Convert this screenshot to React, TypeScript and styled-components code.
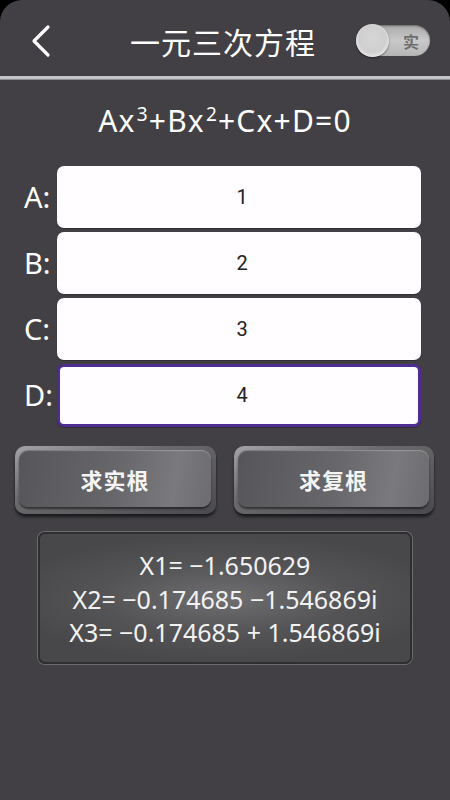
import React from "react";
import styled, { createGlobalStyle } from "styled-components";

const Global = createGlobalStyle`
  html, body { margin: 0; padding: 0; background: #000; }
  body { font-family: "Noto Sans", "Noto Sans CJK SC", sans-serif; }
  * { box-sizing: border-box; }
`;

const Screen = styled.div`
  width: 450px;
  height: 800px;
  background: #424045;
  border-radius: 22px 22px 0 0;
  overflow: hidden;
  display: flex;
  flex-direction: column;
  color: #fff;
`;

const Header = styled.header`
  height: 76px;
  display: flex;
  align-items: center;
  padding: 0 20px 0 30px;
`;

const BackBtn = styled.div`
  width: 26px;
  height: 40px;
  display: flex;
  align-items: center;
  margin-top: 6px;
`;

const Title = styled.h1`
  flex: 1;
  margin: 6px 0 0 0;
  text-align: center;
  font-family: "Noto Sans CJK SC", sans-serif;
  font-weight: 400;
  font-size: 30px;
  letter-spacing: 1px;
  padding-left: 34px;
`;

const Toggle = styled.div`
  width: 74px;
  height: 31px;
  border-radius: 16px;
  background: linear-gradient(#a9a9a9, #c9c9c9 50%, #b5b5b5);
  box-shadow: inset 0 1px 2px rgba(0,0,0,0.4);
  position: relative;
  margin-top: 5px;
  display: flex;
  align-items: center;
  justify-content: flex-end;
  padding-right: 11px;
`;

const Knob = styled.div`
  position: absolute;
  left: 0;
  top: -1px;
  width: 33px;
  height: 33px;
  border-radius: 50%;
  background: radial-gradient(circle at 50% 45%, #d6d6d6 0%, #cfcfcf 55%, #e9e9e9 75%, #9a9a9a 100%);
  box-shadow: 0 1px 2px rgba(0,0,0,0.5);
`;

const ToggleText = styled.span`
  font-family: "Noto Sans CJK SC", serif;
  font-size: 16px;
  font-weight: 700;
  color: #6e6e6e;
`;

const Divider = styled.div`
  height: 4px;
  background: #c3c6c6;
  border-bottom: 1px solid #8b8d8f;
`;

const Equation = styled.div`
  text-align: center;
  font-family: "Noto Sans", sans-serif;
  font-size: 30px;
  letter-spacing: 1.2px;
  margin-top: 20px;
  height: 42px;
  line-height: 42px;
  sup { font-size: 19px; vertical-align: 0; position: relative; top: -11px; margin-left: 1px; }
`;

const Form = styled.div`
  margin-top: 24px;
  display: flex;
  flex-direction: column;
  gap: 4px;
  padding: 0 29px 0 24px;
`;

const Row = styled.div`
  display: flex;
  align-items: center;
  height: 62px;
`;

const Label = styled.span`
  width: 33px;
  font-size: 29px;
  font-family: "Noto Sans", sans-serif;
  margin-top: -2px;
`;

const Field = styled.div<{ $focus?: boolean }>`
  flex: 1;
  height: ${(p) => (p.$focus ? "63px" : "62px")};
  background: #fffdff;
  border-radius: 7px;
  border: ${(p) => (p.$focus ? "3px solid #4f2c92" : "none")};
  display: flex;
  align-items: center;
  justify-content: center;
  padding-left: 6px;
  color: #222;
  font-size: 20px;
  font-family: "Roboto", sans-serif;
  box-shadow: 0 1px 1px rgba(0,0,0,0.3);
`;

const Buttons = styled.div`
  display: grid;
  grid-template-columns: 201px 200px;
  justify-content: space-between;
  padding: 0 16px 0 15px;
  margin-top: 20px;
`;

const Btn = styled.div`
  height: 68px;
  border-radius: 10px;
  background: linear-gradient(160deg, #a4a4a6, #6a6a6d 40%, #4a4a4e);
  padding: 4px 5px 7px 4px;
  box-shadow: 0 3px 3px rgba(0,0,0,0.6);
  display: flex;
`;

const BtnFace = styled.div`
  flex: 1;
  border-radius: 9px;
  background: linear-gradient(100deg, #55555a 0%, #67676b 50%, #7a7a7e 80%, #6c6c70 100%);
  box-shadow: inset 0 1px 1px rgba(255,255,255,0.25), 0 2px 2px rgba(0,0,0,0.5);
  display: flex;
  align-items: center;
  justify-content: center;
  font-family: "Noto Sans CJK SC", sans-serif;
  font-weight: 700;
  font-size: 22px;
  letter-spacing: 1px;
  color: #f4f4f4;
`;

const Result = styled.div`
  margin: 18px 38px 0 38px;
  height: 132px;
  border-radius: 7px;
  border: 2px solid #2e2e31;
  box-shadow: 0 0 0 1px #6b6b6e;
  background: radial-gradient(ellipse 60% 50% at 50% 50%, #6f6f72 0%, #545457 55%, #48484b 100%);
  display: flex;
  flex-direction: column;
  align-items: center;
  justify-content: center;
  font-family: "Noto Sans", sans-serif;
  font-size: 25px;
  line-height: 33.5px;
  color: #f2f2f2;
  padding-top: 3px;
`;

export default function App() {
  return (
    <>
      <Global />
      <Screen>
        <Header>
          <BackBtn>
            <svg width="22" height="34" viewBox="0 0 22 34">
              <path d="M18 3 L4 17 L18 31" fill="none" stroke="#fff" strokeWidth="3.2" strokeLinecap="round" strokeLinejoin="round" />
            </svg>
          </BackBtn>
          <Title>一元三次方程</Title>
          <Toggle>
            <Knob />
            <ToggleText>实</ToggleText>
          </Toggle>
        </Header>
        <Divider />
        <Equation>
          Ax<sup>3</sup>+Bx<sup>2</sup>+Cx+D=0
        </Equation>
        <Form>
          <Row><Label>A:</Label><Field>1</Field></Row>
          <Row><Label>B:</Label><Field>2</Field></Row>
          <Row><Label>C:</Label><Field>3</Field></Row>
          <Row><Label>D:</Label><Field $focus>4</Field></Row>
        </Form>
        <Buttons>
          <Btn><BtnFace>求实根</BtnFace></Btn>
          <Btn><BtnFace>求复根</BtnFace></Btn>
        </Buttons>
        <Result>
          <div>X1= −1.650629</div>
          <div>X2= −0.174685 −1.546869i</div>
          <div>X3= −0.174685 + 1.546869i</div>
        </Result>
      </Screen>
    </>
  );
}
